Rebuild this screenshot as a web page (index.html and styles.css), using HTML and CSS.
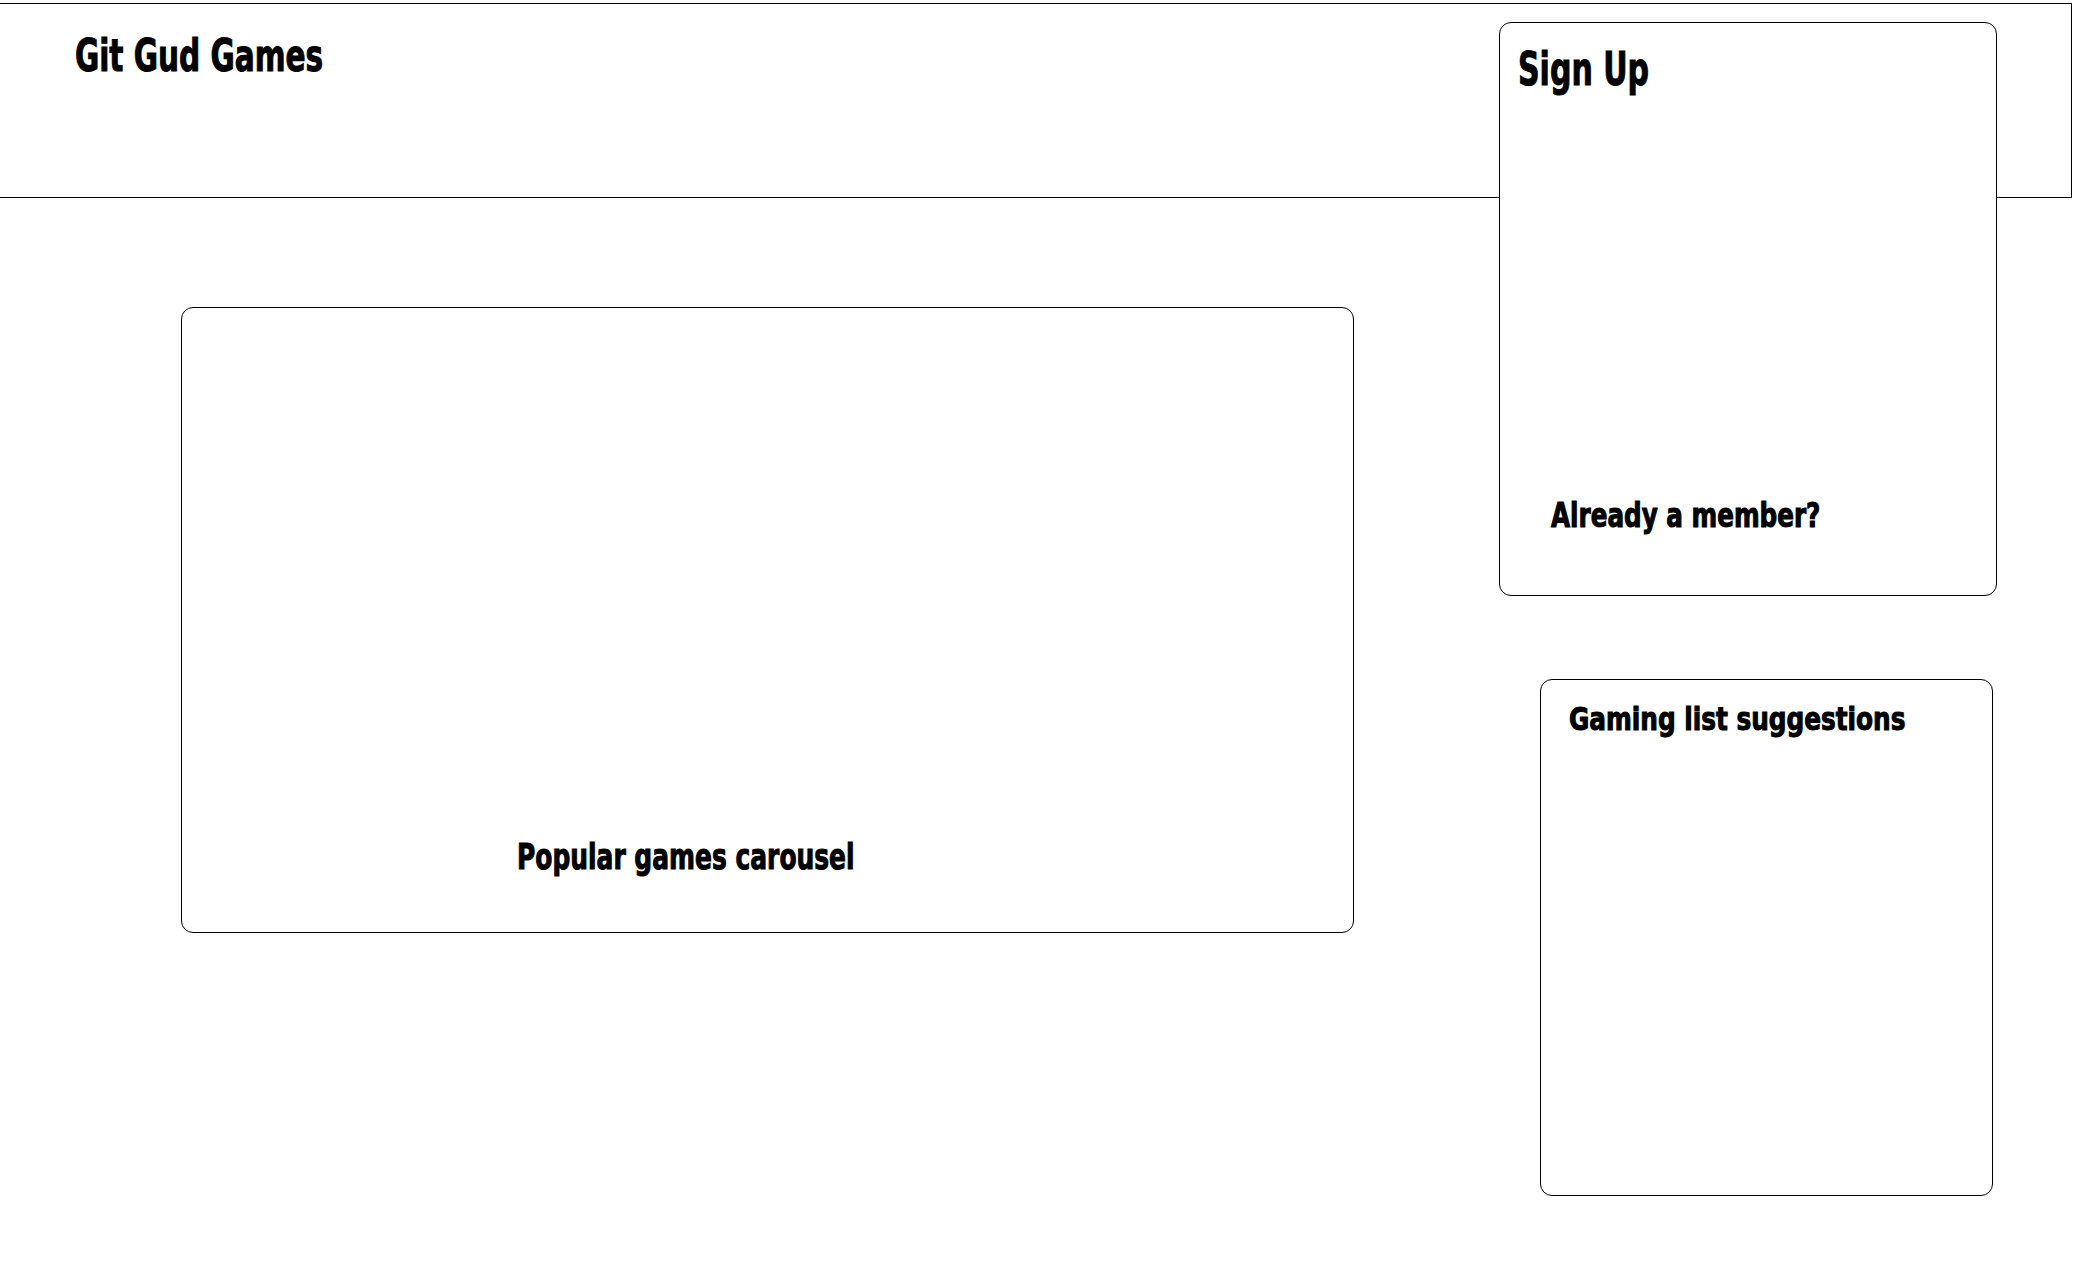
FILE: index.html
```html
<!DOCTYPE html>
<html>

<head>
    <title>Git Gud Games</title>
    <link rel="stylesheet" href="styles.css">
</head>

<body>
    <header class="topbar">
        <h1 class="brand">Git Gud Games</h1>
    </header>

    <main class="content">
        <section class="carousel">
            <h2 class="carousel-title">Popular games carousel</h2>
        </section>

        <aside class="sidebar">
            <div class="card signup">
                <h2 class="signup-title">Sign Up</h2>
                <p class="member">Already a member?</p>
            </div>

            <div class="card suggestions">
                <h3 class="suggestions-title">Gaming list suggestions</h3>
            </div>
        </aside>
    </main>
</body>

</html>
```

FILE: styles.css
```css
body {
    margin: 0;
    background-color: #ffffff;
    color: #000000;
    font-family: "Liberation Sans Narrow", "DejaVu Sans Condensed", "Liberation Sans", sans-serif;
    font-weight: bold;
}

h1,
h2,
h3,
p {
    margin: 0;
    line-height: 1;
    font-weight: bold;
    -webkit-text-stroke: 1px #000;
    transform-origin: left center;
}

.topbar {
    box-sizing: border-box;
    width: 2072px;
    height: 195px;
    margin-top: 3px;
    padding: 29px 0 0 75px;
    border: 1px solid #000;
    border-left: none;
}

.brand {
    font-size: 45px;
    transform: scaleX(0.73);
}

.content {
    display: flex;
    align-items: flex-start;
}

.carousel {
    box-sizing: border-box;
    display: flex;
    flex-direction: column;
    justify-content: flex-end;
    width: 1173px;
    height: 626px;
    margin: 109px 0 0 181px;
    padding: 0 0 57px 335px;
    border: 1px solid #000;
    border-radius: 12px;
}

.carousel-title {
    font-size: 36px;
    transform: scaleX(0.77);
}

.sidebar {
    position: relative;
    margin: -176px 0 0 145px;
}

.card {
    box-sizing: border-box;
    background-color: #ffffff;
    border: 1px solid #000;
    border-radius: 12px;
}

.signup {
    display: flex;
    flex-direction: column;
    width: 498px;
    height: 574px;
    padding: 22px 0 63px 18px;
}

.signup-title {
    font-size: 47px;
    transform: scaleX(0.71);
}

.member {
    margin: auto 0 0 33px;
    font-size: 33px;
    transform: scaleX(0.83);
}

.suggestions {
    width: 453px;
    height: 517px;
    margin: 83px 0 0 41px;
    padding: 23px 0 0 28px;
}

.suggestions-title {
    font-size: 32px;
    transform: scaleX(0.86);
}
```
